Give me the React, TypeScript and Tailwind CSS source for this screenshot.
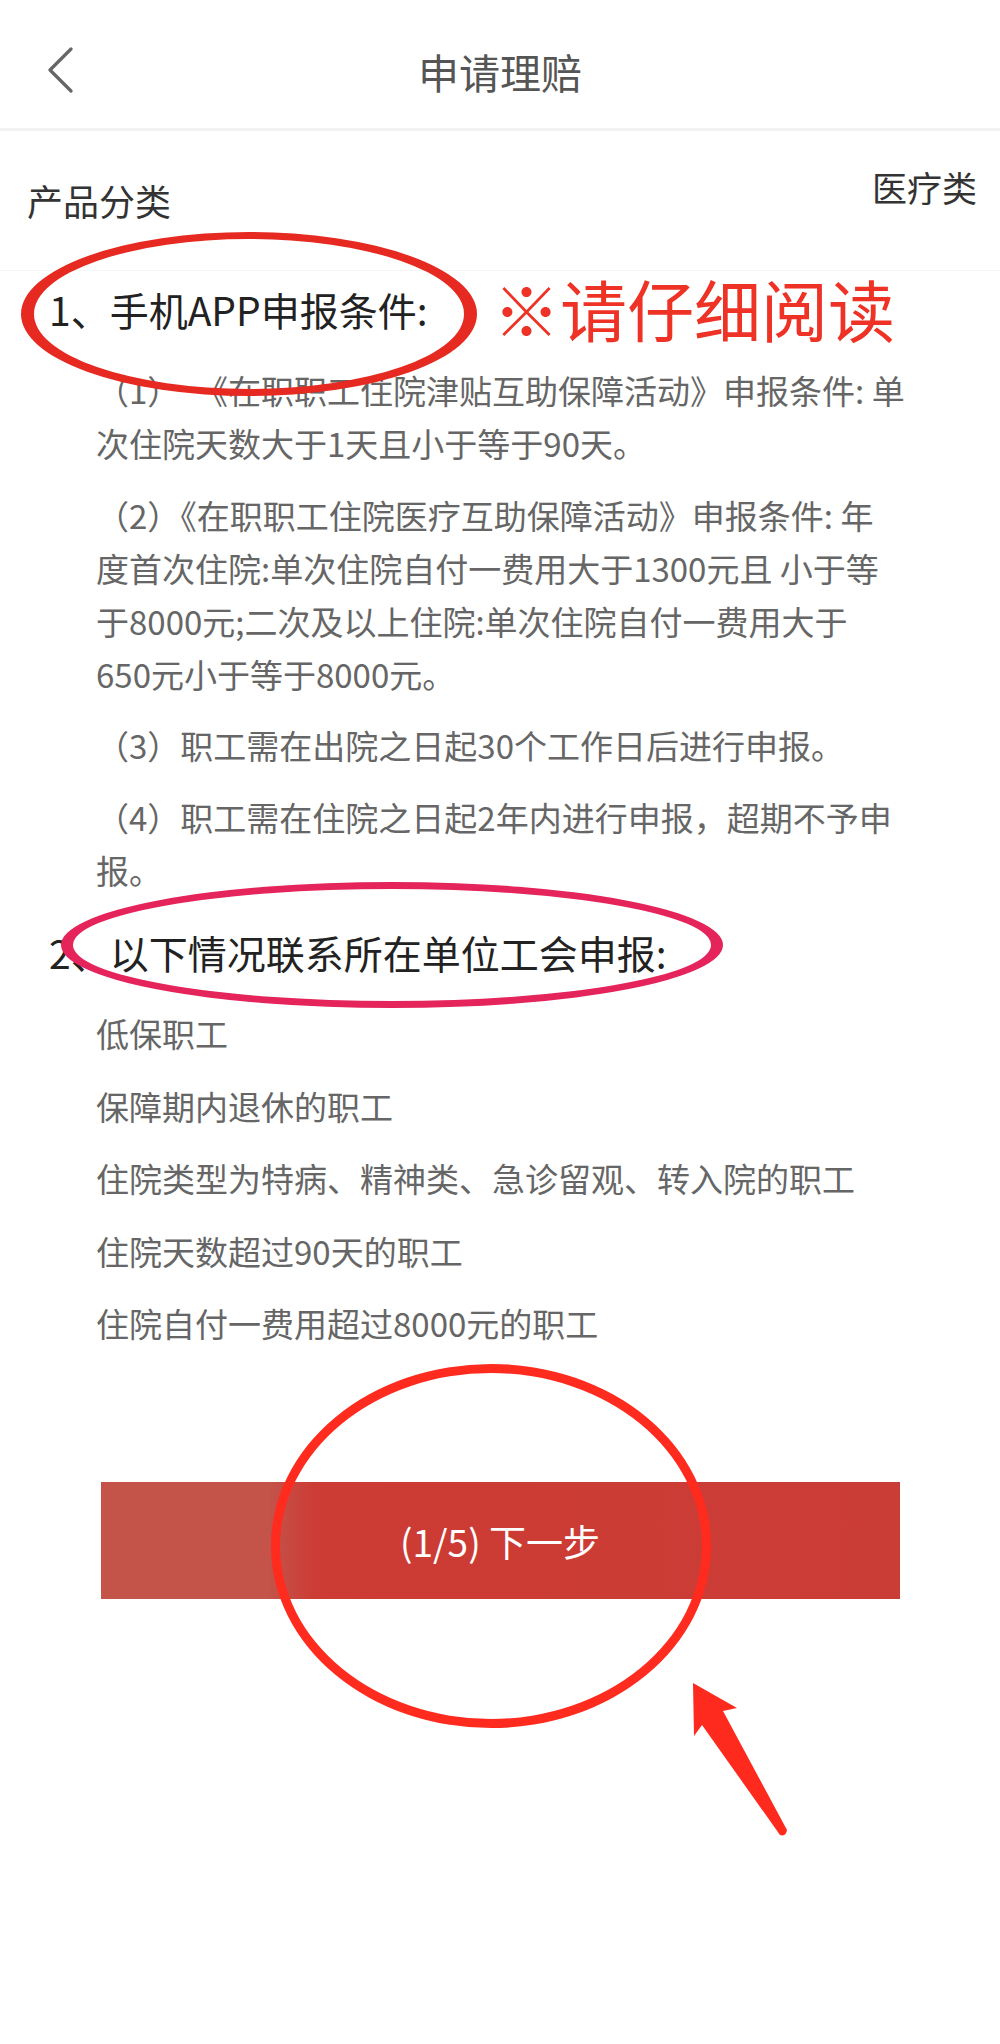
import React from "react";

function ring(cx: number, cy: number, rx: number, ry: number, ix: number, iy: number) {
  const e = (a: number, b: number) =>
    `M${cx - a},${cy} a${a},${b} 0 1,0 ${2 * a},0 a${a},${b} 0 1,0 ${-2 * a},0 Z`;
  return e(rx, ry) + " " + e(ix, iy);
}

const body1 = ["（1）  《在职职工住院津贴互助保障活动》申报条件: 单", "次住院天数大于1天且小于等于90天。"];
const body2 = [
  "（2）《在职职工住院医疗互助保障活动》申报条件: 年",
  "度首次住院:单次住院自付一费用大于1300元且 小于等",
  "于8000元;二次及以上住院:单次住院自付一费用大于",
  "650元小于等于8000元。",
];
const body3 = ["（3）职工需在出院之日起30个工作日后进行申报。"];
const body4 = ["（4）职工需在住院之日起2年内进行申报，超期不予申", "报。"];
const list = [
  "低保职工",
  "保障期内退休的职工",
  "住院类型为特病、精神类、急诊留观、转入院的职工",
  "住院天数超过90天的职工",
  "住院自付一费用超过8000元的职工",
];

function Para({ lines, className }: { lines: string[]; className: string }) {
  return (
    <div className={"pl-[96px] text-[33px] leading-[53px] text-[#666666] " + className}>
      {lines.map((l, i) => (
        <div key={i} className="whitespace-pre">
          {l}
        </div>
      ))}
    </div>
  );
}

export default function App() {
  return (
    <div className="relative w-[1000px] h-[2044px] bg-white overflow-hidden [font-family:'Noto_Sans_CJK_SC','Noto_Sans',sans-serif]">
      {/* Header */}
      <div className="grid grid-cols-[1fr_auto_1fr] items-center h-[131px] pt-[14px] border-b-[3px] border-[#f2f2f2]">
        <div className="pl-[46px] flex items-center">
          <svg width="30" height="48" viewBox="0 0 30 48" fill="none">
            <path d="M25 2 L4 23 L25 44" stroke="#666666" strokeWidth="3.2" strokeLinecap="round" strokeLinejoin="round" />
          </svg>
        </div>
        <div className="text-[41px] leading-[48px] text-[#555555]">申请理赔</div>
        <div />
      </div>

      {/* Product row */}
      <div className="flex justify-between items-start h-[140px] pl-[27px] pr-[23px] border-b border-[#f5f5f5]">
        <div className="mt-[51px] text-[36px] leading-[36px] text-[#333333]">产品分类</div>
        <div className="mt-[38px] text-[35px] leading-[36px] text-[#333333]">医疗类</div>
      </div>

      {/* Content */}
      <div className="flex flex-col">
        <div className="mt-[11px] pl-[49px] text-[39px] leading-[54px] text-[#222222]">1、手机APP申报条件:</div>
        <Para lines={body1} className="mt-[28px]" />
        <Para lines={body2} className="mt-[19px]" />
        <Para lines={body3} className="mt-[18px]" />
        <Para lines={body4} className="mt-[19px]" />
        <div className="mt-[28px] pl-[49px] text-[39px] leading-[54px] text-[#222222]">2、以下情况联系所在单位工会申报:</div>
        <div className="mt-[28px] pl-[96px] flex flex-col gap-[19.5px] text-[33px] leading-[53px] text-[#666666]">
          {list.map((l) => (
            <div key={l}>{l}</div>
          ))}
        </div>
        <div className="mt-[132px] mx-auto w-[799px] h-[117px] flex items-center justify-center bg-[linear-gradient(90deg,#c4534a_0%,#c4534a_21%,#cc3b34_27%,#ca3d36_100%)]">
          <span className="text-[37px] leading-[42px] text-white">(1/5) 下一步</span>
        </div>
      </div>

      {/* Annotations */}
      <div className="absolute left-[493px] top-[274px] text-[67px] leading-[67px] text-[#ee3326] whitespace-nowrap">
        ※请仔细阅读
      </div>
      <svg className="absolute left-0 top-0 pointer-events-none" width="1000" height="2044" viewBox="0 0 1000 2044">
        <path d={ring(249, 314, 228, 82, 215, 75)} fill="#e62a22" fillRule="evenodd" />
        <path d={ring(392, 945, 331, 63, 319, 56)} fill="#e4245a" fillRule="evenodd" />
        <path d={ring(491, 1546, 220, 182, 211, 173)} fill="#ff2b1f" fillRule="evenodd" />
        <path
          d="M693 1683 L737 1708 L723 1711 L787 1830 Q786 1837 780 1835 L702 1725 L694 1736 Z"
          fill="#ff2a1e"
          strokeLinejoin="round"
        />
      </svg>
    </div>
  );
}
